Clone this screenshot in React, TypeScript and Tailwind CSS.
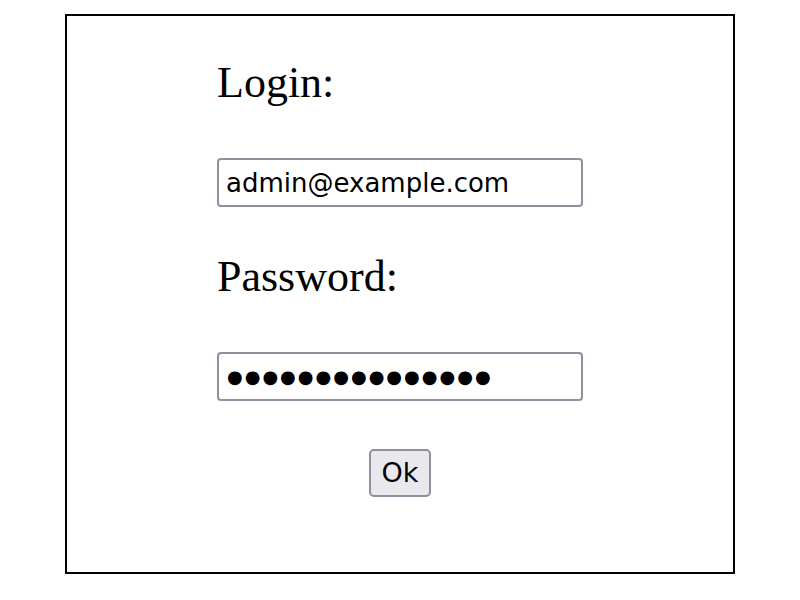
export default function App() {
  return (
    <div className="h-[600px] w-[800px] bg-white pt-[14px]">
      <div className="mx-[65px] flex h-[560px] w-[670px] flex-col items-center border-2 border-black pt-[42px]">
        <form className="flex w-[366px] flex-col" onSubmit={(e) => e.preventDefault()}>
          <label className="font-['Liberation_Serif',serif] text-[44px] leading-[49px] text-black">
            Login:
          </label>
          <input
            type="text"
            defaultValue="admin@example.com"
            className="mt-[51px] h-[49px] w-[366px] rounded-[4px] border-2 border-[#8f8f9d] bg-white pl-[7px] font-['DejaVu_Sans',sans-serif] text-[26px] text-black outline-none"
          />
          <label className="mt-[45px] font-['Liberation_Serif',serif] text-[44px] leading-[49px] text-black">
            Password:
          </label>
          <input
            type="text"
            readOnly
            value="●●●●●●●●●●●●●●●"
            className="mt-[51px] h-[49px] w-[366px] rounded-[4px] border-2 border-[#8f8f9d] bg-white pl-[8px] font-['DejaVu_Sans',sans-serif] text-[18px] tracking-[2px] text-black outline-none"
          />
          <div className="mt-[48px] flex justify-center">
            <button
              type="submit"
              className="h-[48px] w-[62px] rounded-[5px] border-2 border-[#8f8f9d] bg-[#e9e9ed] font-['DejaVu_Sans',sans-serif] text-[27px] text-black"
            >
              Ok
            </button>
          </div>
        </form>
      </div>
    </div>
  );
}
